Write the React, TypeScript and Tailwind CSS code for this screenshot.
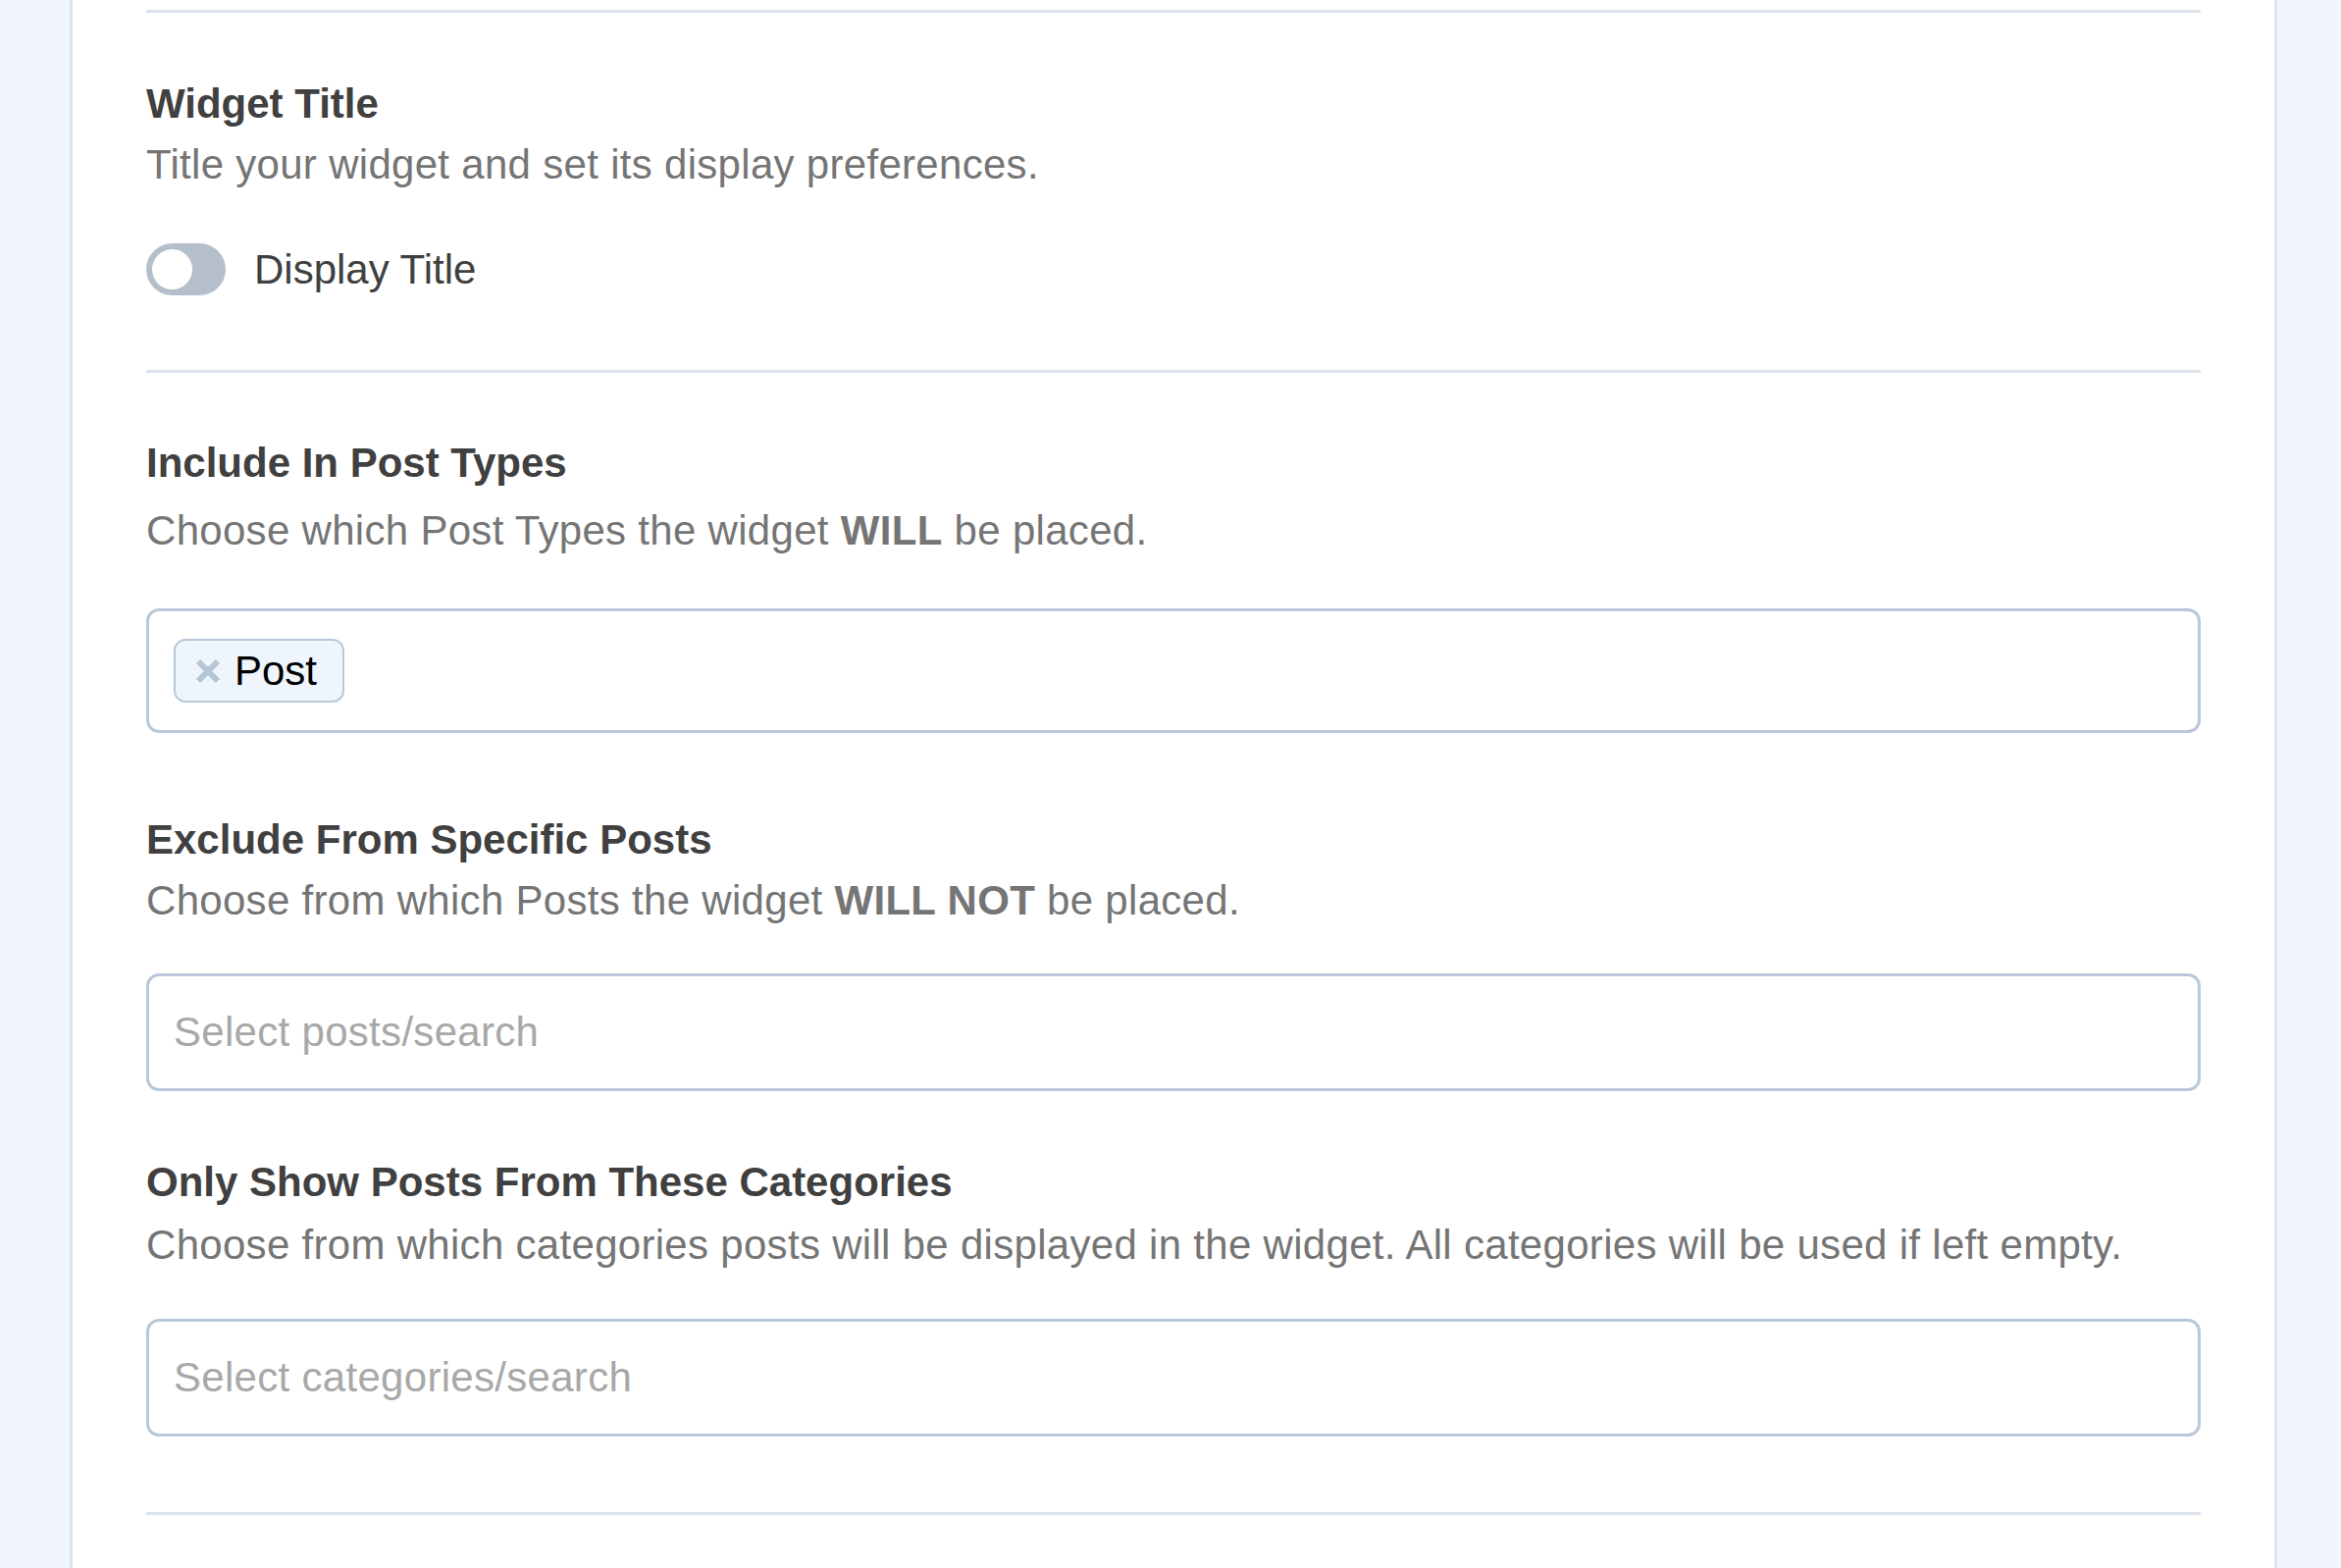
import React from "react"

function Divider({ className = "" }: { className?: string }) {
  return <div className={`h-[3px] bg-[#dbe4ed] ${className}`} />
}

function Heading({ children, className = "" }: { children: React.ReactNode; className?: string }) {
  return (
    <h3 className={`text-[42px] leading-[50px] font-bold text-[#404040] ${className}`}>{children}</h3>
  )
}

function Hint({ children, className = "" }: { children: React.ReactNode; className?: string }) {
  return (
    <p className={`text-[42px] leading-[50px] tracking-[0.3px] text-[#757575] ${className}`}>{children}</p>
  )
}

function Toggle() {
  return (
    <div className="w-[81px] h-[53px] rounded-full bg-[#b5bfcc] p-[6px] flex items-center">
      <div className="w-[41px] h-[41px] rounded-full bg-white" />
    </div>
  )
}

function Chip({ label }: { label: string }) {
  return (
    <div className="flex items-center h-[65px] rounded-[12px] border-2 border-[#b9c8d9] bg-[#eff5fd] pl-[19px] pr-[26px]">
      <svg width="28" height="24" viewBox="0 0 28 24" className="shrink-0">
        <path d="M4 2 L24 22 M24 2 L4 22" stroke="#b7c6d7" strokeWidth="6" />
      </svg>
      <span className="ml-[13px] text-[42px] leading-none text-black">{label}</span>
    </div>
  )
}

function SearchBox({ placeholder }: { placeholder: string }) {
  return (
    <div className="h-[120px] rounded-[13px] border-[3px] border-[#b9c8d9] bg-white flex items-center px-[25px]">
      <span className="text-[42px] leading-none tracking-[0.3px] text-[#a8a8a8]">{placeholder}</span>
    </div>
  )
}

export default function App() {
  return (
    <div
      className="h-[1598px] overflow-hidden bg-[#f1f6fd]"
      style={{ fontFamily: '"Liberation Sans", Arial, Helvetica, sans-serif' }}
    >
      <div className="ml-[71px] w-[2250px] h-full bg-white border-x-[3px] border-[#dae4ee] px-[75px] pt-[10px]">
        <Divider />

        {/* widget title */}
        <Heading className="mt-[68px]">Widget Title</Heading>
        <Hint className="mt-[12px]">Title your widget and set its display preferences.</Hint>
        <div className="mt-[55px] flex items-center gap-[29px]">
          <Toggle />
          <span className="text-[42px] leading-[50px] text-[#404040]">Display Title</span>
        </div>

        <Divider className="mt-[76px]" />

        {/* post types */}
        <Heading className="mt-[67px]">Include In Post Types</Heading>
        <Hint className="mt-[19px]">
          Choose which Post Types the widget <b className="font-bold">WILL</b> be placed.
        </Hint>
        <div className="mt-[54px] rounded-[13px] border-[3px] border-[#b9c8d9] bg-white px-[25px] py-[28px] flex">
          <Chip label="Post" />
        </div>

        {/* exclude posts */}
        <Heading className="mt-[84px]">Exclude From Specific Posts</Heading>
        <Hint className="mt-[12px]">
          Choose from which Posts the widget <b className="font-bold">WILL NOT</b> be placed.
        </Hint>
        <div className="mt-[49px]">
          <SearchBox placeholder="Select posts/search" />
        </div>

        {/* categories */}
        <Heading className="mt-[68px]">Only Show Posts From These Categories</Heading>
        <Hint className="mt-[14px]">
          Choose from which categories posts will be displayed in the widget. All categories will be used if left empty.
        </Hint>
        <div className="mt-[50px]">
          <SearchBox placeholder="Select categories/search" />
        </div>

        <Divider className="mt-[77px]" />
      </div>
    </div>
  )
}
